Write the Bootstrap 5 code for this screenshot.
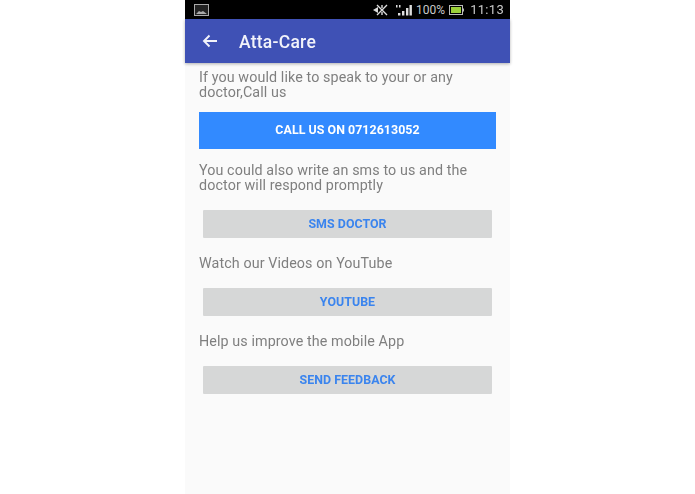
<!DOCTYPE html>
<html lang="en">
<head>
<meta charset="utf-8">
<title>Atta-Care</title>
<link href="https://cdn.jsdelivr.net/npm/bootstrap@5.3.0/dist/css/bootstrap.min.css" rel="stylesheet">
<style>
html, body { height: 100%; background: #fff; }
body { font-family: Roboto, "Liberation Sans", sans-serif; }
.phone-shell { width: 325px; height: 494px; margin-left: 185px; background: #fafafa; filter: blur(.35px); }
.status-strip { height: 19px; background: #000; color: #c9c9c9; font-size: 12px; padding: 0 6px 0 9px; }
.status-clock { font-size: 13px; letter-spacing: .3px; margin-left: 6px; }
.app-strip { height: 44px; background: #3f51b5; color: #f2f3fa; padding-left: 17px; box-shadow: 0 1px 3px rgba(0,0,0,.3); }
.app-title { font-size: 17.500px; font-weight: 500; margin: 2px 0 0 21px; letter-spacing: .25px; }
.content-col { padding: 7px 14px 0; }
.say { color: #7f7f7f; font-size: 14.300px; line-height: 15px; margin: 0; letter-spacing: .1px; }
.cta { display: block; border: 0; border-radius: 0; font-weight: 700; font-size: 12.400px; letter-spacing: .05px; padding: 0; }
.cta-main { width: 297px; height: 37px; background: #328aff; color: #fff; margin: 12px 0 14px; }
.cta-soft { width: 289px; height: 28px; margin: 17px 0 0 4px; background: #d6d7d7; color: #3a84ee; border-radius: 1px; }
.say-gap { margin-top: 18px; }
</style>
</head>
<body>
<div class="phone-shell d-flex flex-column">
  <div class="status-strip d-flex align-items-center">
    <svg width="15" height="12" viewBox="0 0 15 12"><rect x=".5" y=".5" width="14" height="11" fill="#222" stroke="#aaa"/><path d="M2 10 L5 7 L7 8 L9 7 L13 10Z" fill="#aaa"/></svg>
    <div class="d-flex align-items-center ms-auto">
      <svg width="15" height="12" viewBox="0 0 15 12" class="me-2"><path d="M4 1 L14 11 M14 1 L4 11 M9 1 V4 M9 8 V11" stroke="#ddd" stroke-width="1.400" fill="none"/><path d="M0 6 L5 3 V9Z" fill="#ddd"/></svg>
      <svg width="16" height="12" viewBox="0 0 16 12"><path d="M0 1h1.500v2.500H0zM3 1h1.500v2.500H3z" fill="#ddd"/><rect x="2" y="9" width="2.400" height="2.500" fill="#ddd"/><rect x="6" y="7" width="2.400" height="4.500" fill="#ddd"/><rect x="10" y="4" width="2.400" height="7.500" fill="#ddd"/><rect x="13.500" y="1" width="2.400" height="10.500" fill="#ddd"/></svg>
      <span class="ms-1">100%</span>
      <svg width="15" height="10" viewBox="0 0 15 10" class="ms-1"><rect x=".5" y=".5" width="13" height="9" fill="#000" stroke="#bbb"/><rect x="2" y="2" width="10" height="6" fill="#9bd03a"/><rect x="14" y="3.500" width="1" height="3" fill="#bbb"/></svg>
      <span class="status-clock">11:13</span>
    </div>
  </div>
  <div class="app-strip d-flex align-items-center">
    <svg width="16" height="14" viewBox="0 0 16 14"><path d="M15 7H2M7.500 1.500 2 7l5.500 5.500" stroke="#f2f3fa" stroke-width="1.900" fill="none"/></svg>
    <span class="app-title">Atta-Care</span>
  </div>
  <div class="content-col">
    <p class="say">If you would like to speak to your or any<br>doctor,Call us</p>
    <button type="button" class="btn cta cta-main">CALL US ON 0712613052</button>
    <p class="say">You could also write an sms to us and the<br>doctor will respond promptly</p>
    <button type="button" class="btn cta cta-soft">SMS DOCTOR</button>
    <p class="say say-gap">Watch our Videos on YouTube</p>
    <button type="button" class="btn cta cta-soft">YOUTUBE</button>
    <p class="say say-gap">Help us improve the mobile App</p>
    <button type="button" class="btn cta cta-soft">SEND FEEDBACK</button>
  </div>
</div>
<script src="https://cdn.jsdelivr.net/npm/bootstrap@5.3.0/dist/js/bootstrap.bundle.min.js"></script>
</body>
</html>
